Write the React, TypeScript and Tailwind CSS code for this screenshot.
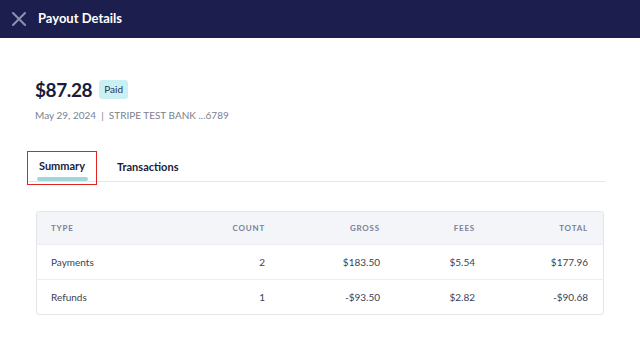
import React from 'react';

const rows = [
  { type: 'Payments', count: '2', gross: '$183.50', fees: '$5.54', total: '$177.96' },
  { type: 'Refunds', count: '1', gross: '-$93.50', fees: '$2.82', total: '-$90.68' },
];

const cols = 'grid grid-cols-[140px_102px_115px_95px_1fr] items-center';

export default function App() {
  return (
    <div className="w-[640px] h-[364px] bg-white font-['Lato',sans-serif] text-[#1a1c3a] overflow-hidden">
      {/* top bar */}
      <div className="h-[38px] bg-[#1c1f4d] flex items-center pl-[12px] gap-[12px]">
        <svg width="14" height="14" viewBox="0 0 14 14" className="shrink-0">
          <path d="M1 1L13 13M13 1L1 13" stroke="#8b90b4" strokeWidth="2" strokeLinecap="round" />
        </svg>
        <span className="text-white text-[13px] font-bold">Payout Details</span>
      </div>

      <div className="px-[35px] pt-[42px]">
        <div className="flex items-center gap-[7px]">
          <span className="text-[19px] font-bold tracking-[-0.4px] leading-none">$87.28</span>
          <span className="bg-[#caf0f3] text-[#2a3050] text-[10px] px-[5px] py-[3px] rounded-[3px] leading-[13px]">Paid</span>
        </div>
        <div className="mt-[9px] text-[10px] text-[#7a7f90]">
          May 29, 2024 &nbsp;|&nbsp; STRIPE TEST BANK ...6789
        </div>
      </div>

      {/* tabs */}
      <div className="ml-[27px] mr-[35px] mt-[27px] border-b border-[#e3e5ea] flex items-end h-[32px]">
        <div className="h-[34px] w-[70px] border-[1.5px] border-[#e02424] -mb-[4px] flex flex-col items-center">
          <span className="text-[11px] font-bold mt-[6px]">Summary</span>
          <div className="mt-[2px] h-[4px] w-[51px] rounded-full bg-[#9fd7dd]" />
        </div>
        <div className="h-full ml-[20px] pt-[3px]">
          <span className="text-[11px] font-bold">Transactions</span>
        </div>
      </div>

      {/* table */}
      <div className="mx-[36px] mt-[29px] border border-[#e3e5ea] rounded-[3px] overflow-hidden text-[10px]">
        <div className={`${cols} h-[32px] bg-[#f4f5f9] text-[8px] text-[#7b8096] tracking-[0.8px] font-bold`}>
          <div className="pl-[14px]">TYPE</div>
          <div className="text-right pr-[14px]">COUNT</div>
          <div className="text-right pr-[14px]">GROSS</div>
          <div className="text-right pr-[14px]">FEES</div>
          <div className="text-right pr-[15px]">TOTAL</div>
        </div>
        {rows.map((r) => (
          <div key={r.type} className={`${cols} h-[35px] text-[#3a3f55] border-t border-[#eceef2]`}>
            <div className="pl-[14px]">{r.type}</div>
            <div className="text-right pr-[14px]">{r.count}</div>
            <div className="text-right pr-[14px]">{r.gross}</div>
            <div className="text-right pr-[14px]">{r.fees}</div>
            <div className="text-right pr-[15px]">{r.total}</div>
          </div>
        ))}
      </div>
    </div>
  );
}
